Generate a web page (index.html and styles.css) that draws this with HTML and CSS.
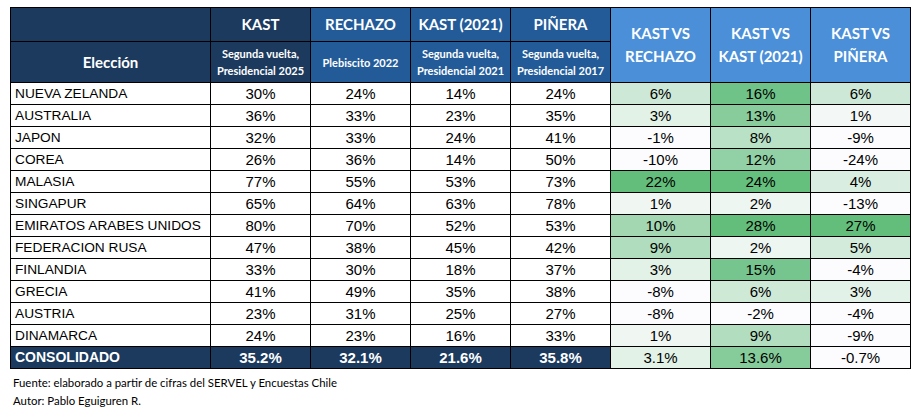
FILE: index.html
```html
<!DOCTYPE html>
<html lang="es">
<head>
<meta charset="utf-8">
<title>Elección</title>
<link rel="stylesheet" href="styles.css">
</head>
<body>
<table class="tbl">
  <colgroup>
    <col class="c-name"><col class="c-num"><col class="c-num"><col class="c-num"><col class="c-num"><col class="c-num"><col class="c-num"><col class="c-num">
  </colgroup>
  <thead>
    <tr class="h1">
      <th class="navy big"></th>
      <th class="navy big">KAST</th>
      <th class="mid big">RECHAZO</th>
      <th class="mid big">KAST (2021)</th>
      <th class="mid big">PIÑERA</th>
      <th rowspan="2" class="light big vs">KAST VS<br>RECHAZO</th>
      <th rowspan="2" class="light big vs">KAST VS<br>KAST (2021)</th>
      <th rowspan="2" class="light big vs">KAST VS<br>PIÑERA</th>
    </tr>
    <tr class="h2">
      <th class="navy big">Elección</th>
      <th class="navy sub">Segunda vuelta,<br>Presidencial 2025</th>
      <th class="mid sub">Plebiscito 2022</th>
      <th class="mid sub">Segunda vuelta,<br>Presidencial 2021</th>
      <th class="mid sub">Segunda vuelta,<br>Presidencial 2017</th>
    </tr>
  </thead>
  <tbody>
    <tr><td class="name">NUEVA ZELANDA</td><td>30%</td><td>24%</td><td>14%</td><td>24%</td><td style="background:#cde8d6">6%</td><td style="background:#6fc288">16%</td><td style="background:#cde8d6">6%</td></tr>
    <tr><td class="name">AUSTRALIA</td><td>36%</td><td>33%</td><td>23%</td><td>35%</td><td style="background:#e2f2e7">3%</td><td style="background:#88cc9c">13%</td><td style="background:#f3f8f6">1%</td></tr>
    <tr><td class="name">JAPON</td><td>32%</td><td>33%</td><td>24%</td><td>41%</td><td style="background:#fcfcff">-1%</td><td style="background:#b9e1c5">8%</td><td style="background:#fcfcff">-9%</td></tr>
    <tr><td class="name">COREA</td><td>26%</td><td>36%</td><td>14%</td><td>50%</td><td style="background:#fcfcff">-10%</td><td style="background:#92d0a5">12%</td><td style="background:#fcfcff">-24%</td></tr>
    <tr><td class="name">MALASIA</td><td>77%</td><td>55%</td><td>53%</td><td>73%</td><td style="background:#63be7b">22%</td><td style="background:#65bf7d">24%</td><td style="background:#d9eee0">4%</td></tr>
    <tr><td class="name">SINGAPUR</td><td>65%</td><td>64%</td><td>63%</td><td>78%</td><td style="background:#f0f7f3">1%</td><td style="background:#eef6f1">2%</td><td style="background:#fcfcff">-13%</td></tr>
    <tr><td class="name">EMIRATOS ARABES UNIDOS</td><td>80%</td><td>70%</td><td>52%</td><td>53%</td><td style="background:#a3d7b2">10%</td><td style="background:#63be7b">28%</td><td style="background:#63be7b">27%</td></tr>
    <tr><td class="name">FEDERACION RUSA</td><td>47%</td><td>38%</td><td>45%</td><td>42%</td><td style="background:#b0ddbd">9%</td><td style="background:#eef6f1">2%</td><td style="background:#d3ebdb">5%</td></tr>
    <tr><td class="name">FINLANDIA</td><td>33%</td><td>30%</td><td>18%</td><td>37%</td><td style="background:#e2f2e7">3%</td><td style="background:#77c58e">15%</td><td style="background:#fcfcff">-4%</td></tr>
    <tr><td class="name">GRECIA</td><td>41%</td><td>49%</td><td>35%</td><td>38%</td><td style="background:#fcfcff">-8%</td><td style="background:#cfe9d7">6%</td><td style="background:#e3f2e8">3%</td></tr>
    <tr><td class="name">AUSTRIA</td><td>23%</td><td>31%</td><td>25%</td><td>27%</td><td style="background:#fcfcff">-8%</td><td style="background:#fcfcff">-2%</td><td style="background:#fcfcff">-4%</td></tr>
    <tr><td class="name">DINAMARCA</td><td>24%</td><td>23%</td><td>16%</td><td>33%</td><td style="background:#f0f7f3">1%</td><td style="background:#b2debf">9%</td><td style="background:#fcfcff">-9%</td></tr>
    <tr class="total"><td class="name">CONSOLIDADO</td><td>35.2%</td><td>32.1%</td><td>21.6%</td><td>35.8%</td><td class="plain" style="background:#e2f2e7">3.1%</td><td class="plain" style="background:#86cb9a">13.6%</td><td class="plain" style="background:#fcfcff">-0.7%</td></tr>
  </tbody>
</table>
<div class="notes">
  <p>Fuente: elaborado a partir de cifras del SERVEL y Encuestas Chile</p>
  <p>Autor: Pablo Eguiguren R.</p>
</div>
</body>
</html>
```
FILE: styles.css
```css
html, body {
  margin: 0;
  padding: 0;
  background: #ffffff;
}
body {
  padding: 7px 0 0 10px;
  font-family: "Liberation Sans", Arial, sans-serif;
  color: #000;
}
.tbl {
  border-collapse: collapse;
  table-layout: fixed;
  width: 900px;
  border: 1px solid #000;
}
.c-name { width: 200px; }
.c-num { width: 100px; }
.tbl th, .tbl td {
  border: 1px solid #000;
  padding: 0;
  text-align: center;
  vertical-align: middle;
}
.tbl th {
  color: #fff;
  font-family: Lato, "Liberation Sans", sans-serif;
  font-weight: 700;
}
.h1 { height: 34px; }
.h2 { height: 41px; }
.navy { background: #1b3a5e; }
.mid { background: #225b98; }
.light { background: #4a8fd8; }
.big { font-size: 15px; line-height: 23px; }
.sub { font-size: 11px; line-height: 17px; }
.vs { padding-top: 2px; }
.tbl td {
  height: 21px;
  font-size: 15px;
  line-height: 21px;
}
.tbl td.name {
  text-align: left;
  padding-left: 4px;
  font-size: 13.7px;
}
.total td {
  background: #1b3a5e;
  color: #fff;
  font-weight: 700;
}
.total td.name { font-size: 14px; }
.total td.plain {
  color: #000;
  font-weight: 400;
}
.notes {
  margin-top: 5px;
  padding-left: 3px;
  font-family: Lato, "Liberation Sans", sans-serif;
  font-size: 11.4px;
  color: #000;
}
.notes p {
  margin: 0;
  line-height: 18px;
}
```
